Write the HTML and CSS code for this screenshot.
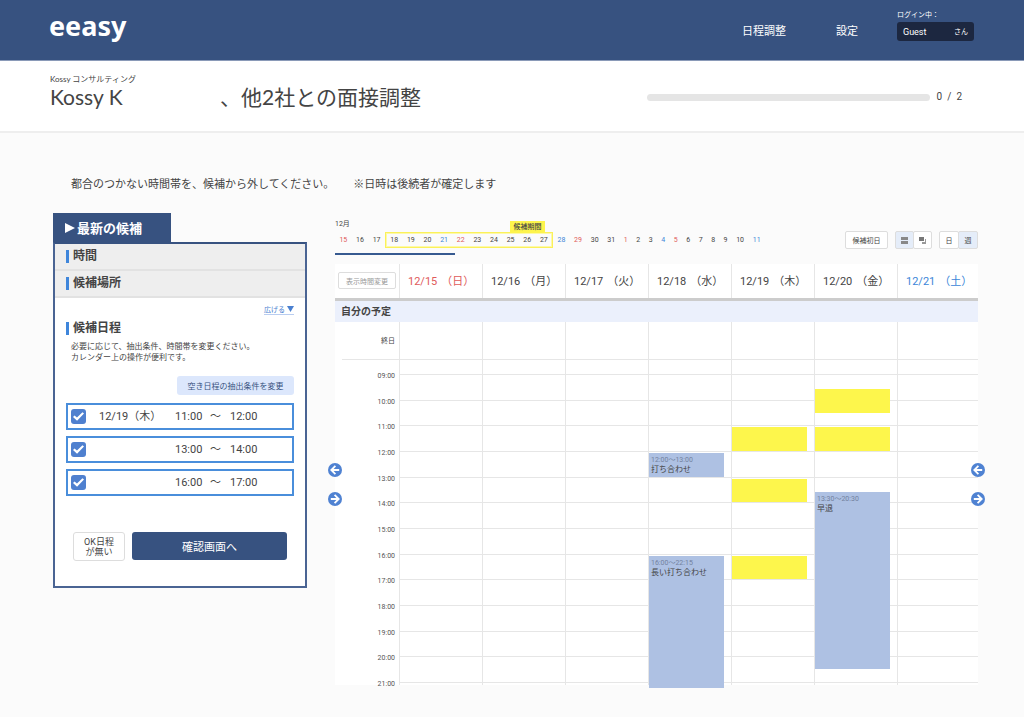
FILE: index.html
```html
<!DOCTYPE html>
<html lang="ja">
<head>
<meta charset="utf-8">
<meta name="viewport" content="width=device-width, initial-scale=1">
<title>eeasy</title>
<link rel="stylesheet" href="styles.css">
</head>
<body>
<svg class="defs" aria-hidden="true">
  <symbol id="arrow-left" viewBox="0 0 14 14"><circle cx="7" cy="7" r="7" fill="#4f82d2"/><path d="M11.2 7H4M7.4 2.9L3.3 7L7.4 11.1" fill="none" stroke="#fff" stroke-width="1.8"/></symbol>
  <symbol id="arrow-right" viewBox="0 0 14 14"><circle cx="7" cy="7" r="7" fill="#4f82d2"/><path d="M2.8 7H10M6.6 2.9L10.7 7L6.6 11.1" fill="none" stroke="#fff" stroke-width="1.8"/></symbol>
</svg>

<header class="topbar">
  <a class="logo" href="#">eeasy</a>
  <nav class="nav">
    <a href="#">日程調整</a>
    <a href="#">設定</a>
  </nav>
  <div class="login">
    <span class="login-label">ログイン中：</span>
    <div class="login-user"><span class="login-name">Guest</span><span>さん</span></div>
  </div>
</header>

<section class="subject">
  <div class="subject-text">
    <p class="company">Kossy コンサルティング</p>
    <h1 class="title"><span class="title-name">Kossy K</span><span>、他2社との面接調整</span></h1>
  </div>
  <div class="progress">
    <progress class="bar" value="0" max="2" aria-label="進捗"></progress>
    <div class="count"><span>0</span><span>/</span><span>2</span></div>
  </div>
</section>

<main>
  <p class="intro"><span>都合のつかない時間帯を、候補から外してください。</span><span>※日時は後続者が確定します</span></p>

  <div class="columns">
    <aside class="side">
      <div class="tab"><svg width="10" height="10" viewBox="0 0 10 10"><path d="M0 0L10 5L0 10z" fill="#fff"/></svg>最新の候補</div>
      <div class="panel">
        <div class="fold"><h2 class="heading">時間</h2></div>
        <div class="fold"><h2 class="heading">候補場所</h2></div>
        <div class="panel-body">
          <a class="expand" href="#">広げる <svg width="7" height="6" viewBox="0 0 7 6"><path d="M0 0H7L3.5 6z" fill="#4a80d0"/></svg></a>
          <h2 class="heading">候補日程</h2>
          <p class="desc">必要に応じて、抽出条件、時間帯を変更ください。<br>カレンダー上の操作が便利です。</p>
          <button class="condition" type="button">空き日程の抽出条件を変更</button>
          <div class="slots">
            <label class="slot"><input type="checkbox" checked><span>12/19（木）</span><span>11:00</span><span>〜</span><span>12:00</span></label>
            <label class="slot"><input type="checkbox" checked><span></span><span>13:00</span><span>〜</span><span>14:00</span></label>
            <label class="slot"><input type="checkbox" checked><span></span><span>16:00</span><span>〜</span><span>17:00</span></label>
          </div>
          <div class="actions">
            <button class="none" type="button">OK日程<br>が無い</button>
            <button class="confirm" type="button">確認画面へ</button>
          </div>
        </div>
      </div>
    </aside>

    <section class="schedule">
      <div class="month">12月</div>
      <div class="tools">
        <div class="strip">
          <span class="sun">15</span><span>16</span><span>17</span>
          <div class="period"><b class="period-tag">候補期間</b><span>18</span><span>19</span><span>20</span><span class="sat">21</span><span class="sun">22</span><span>23</span><span>24</span><span>25</span><span>26</span><span>27</span></div>
          <span class="sat">28</span><span class="sun">29</span><span>30</span><span>31</span>
          <span class="one sun">1</span><span class="one">2</span><span class="one">3</span><span class="one sat">4</span><span class="one sun">5</span><span class="one">6</span><span class="one">7</span><span class="one">8</span><span class="one">9</span>
          <span>10</span><span class="sat">11</span>
        </div>
        <div class="buttons">
          <button class="tool wide" type="button">候補初日</button>
          <div class="group icons">
            <button class="tool on" type="button" aria-label="一覧表示"><svg width="7" height="7" viewBox="0 0 7 7"><path d="M0 0H7V3H0zM0 4H7V7H0z" fill="#888"/></svg></button>
            <button class="tool" type="button" aria-label="重ねて表示"><svg width="7" height="7" viewBox="0 0 7 7"><path d="M0 0H5V4H0z" fill="#777"/><path d="M3 5H6V2H7V7H3z" fill="#999"/></svg></button>
          </div>
          <div class="group">
            <button class="tool" type="button">日</button>
            <button class="tool on" type="button">週</button>
          </div>
        </div>
      </div>
      <div class="marker"></div>

      <div class="calendar">
        <div class="week head">
          <div class="head-tool"><button class="range" type="button">表示時間変更</button></div>
          <div class="day sun"><span>12/15</span><span>（日）</span></div>
          <div class="day"><span>12/16</span><span>（月）</span></div>
          <div class="day"><span>12/17</span><span>（火）</span></div>
          <div class="day"><span>12/18</span><span>（水）</span></div>
          <div class="day"><span>12/19</span><span>（木）</span></div>
          <div class="day"><span>12/20</span><span>（金）</span></div>
          <div class="day sat"><span>12/21</span><span>（土）</span></div>
        </div>
        <h2 class="owner">自分の予定</h2>
        <div class="week allday">
          <div class="allday-label">終日</div>
          <div class="cell"></div><div class="cell"></div><div class="cell"></div><div class="cell"></div><div class="cell"></div><div class="cell"></div><div class="cell"></div>
        </div>
        <div class="week hours">
          <div class="times">
            <span>09:00</span><span>10:00</span><span>11:00</span><span>12:00</span><span>13:00</span><span>14:00</span><span>15:00</span><span>16:00</span><span>17:00</span><span>18:00</span><span>19:00</span><span>20:00</span><span>21:00</span>
          </div>
          <div class="lines"><i></i><i></i><i></i><i></i><i></i><i></i><i></i><i></i><i></i><i></i><i></i><i></i><i></i></div>
          <div class="slots-day d1"></div>
          <div class="slots-day d2"></div>
          <div class="slots-day d3"></div>
          <div class="slots-day d4">
            <div class="event" style="grid-row: 7 / 9"><small>12:00〜13:00</small>打ち合わせ</div>
            <div class="event past" style="grid-row: 15 / 25"><small>16:00〜22:15</small>長い打ち合わせ</div>
          </div>
          <div class="slots-day d5">
            <div class="free" style="grid-row: 5 / 7"></div>
            <div class="free" style="grid-row: 9 / 11"></div>
            <div class="free" style="grid-row: 15 / 17"></div>
          </div>
          <div class="slots-day d6">
            <div class="free" style="grid-row: 2 / 4"></div>
            <div class="free" style="grid-row: 5 / 7"></div>
            <div class="event" style="grid-row: 10 / 24"><small>13:30〜20:30</small>早退</div>
          </div>
          <div class="slots-day d7"></div>
        </div>
        <div class="pager start">
          <button type="button" aria-label="前へ"><svg width="14" height="14"><use href="#arrow-left"/></svg></button>
          <button type="button" aria-label="次へ"><svg width="14" height="14"><use href="#arrow-right"/></svg></button>
        </div>
        <div class="pager end">
          <button type="button" aria-label="前へ"><svg width="14" height="14"><use href="#arrow-left"/></svg></button>
          <button type="button" aria-label="次へ"><svg width="14" height="14"><use href="#arrow-right"/></svg></button>
        </div>
      </div>
    </section>
  </div>
</main>
</body>
</html>
```
FILE: styles.css
```css
* { box-sizing: border-box; }
body {
  margin: 0;
  background: #fbfbfb;
  color: #444;
  font-family: Roboto, "Noto Sans CJK JP", sans-serif;
  font-size: 11px;
}
h1, h2, p { margin: 0; }
a { text-decoration: none; }
svg { display: block; }
button { font: inherit; color: inherit; padding: 0; cursor: pointer; }
.defs { position: absolute; width: 0; height: 0; }
.sun { color: #e05a5a; }
.sat { color: #3b86d8; }

/* top bar */
.topbar {
  display: flex;
  align-items: flex-start;
  height: 61px;
  padding: 0 50px 0 49px;
  background: #375280;
  border-bottom: 1px solid #8a9ab8;
  color: #fff;
}
.logo {
  flex: 1;
  padding-top: 8px;
  color: #fff;
  font: bold 27px/36px "Noto Sans", sans-serif;
}
.nav { display: flex; gap: 50px; padding: 24px 39px 0 0; line-height: 16px; }
.nav a { color: #fff; }
.login { width: 77px; padding-top: 10px; font-size: 7px; line-height: 10px; }
.login-label { display: block; }
.login-user {
  display: flex;
  justify-content: space-between;
  align-items: center;
  height: 19px;
  margin-top: 2px;
  padding: 0 6px;
  border-radius: 3px;
  background: #1c2740;
}
.login-name { font-size: 9px; }

/* subject */
.subject {
  display: flex;
  align-items: flex-start;
  justify-content: space-between;
  height: 72px;
  padding: 12px 62px 0 50px;
  background: #fff;
  border-bottom: 2px solid #eee;
}
.company { font: 8px/12px Lato, "Noto Sans CJK JP", sans-serif; }
.title {
  display: flex;
  font: 21px/24px Lato, "Noto Sans CJK JP", sans-serif;
}
.title-name { width: 170px; }
.progress { display: flex; align-items: center; gap: 7px; padding-top: 17px; }
.bar {
  appearance: none;
  width: 283px;
  height: 7px;
  border: 0;
  border-radius: 4px;
  background: #e5e5e5;
  overflow: hidden;
}
.bar::-webkit-progress-bar { background: #e5e5e5; }
.bar::-webkit-progress-value { background: #4a80d0; }
.count { display: flex; gap: 5px; font-size: 10px; line-height: 14px; }

/* main */
main { padding: 44px 46px 30px 53px; }
.intro { display: flex; gap: 19px; padding-left: 18px; line-height: 16px; }
.columns { display: flex; align-items: flex-start; gap: 28px; padding-top: 20px; }

/* side panel */
.side { flex: none; width: 254px; }
.tab {
  display: flex;
  align-items: center;
  gap: 2px;
  width: 118px;
  height: 29px;
  padding-left: 12px;
  background: #375280;
  color: #fff;
  font-size: 13px;
  font-weight: bold;
}
.panel { border: 2px solid #4a6493; border-top-color: #375280; background: #fff; }
.fold {
  display: flex;
  align-items: center;
  height: 27px;
  padding-left: 11px;
  background: #eee;
  border-bottom: 2px solid #e2e2e2;
}
.heading {
  padding-left: 4px;
  border-left: 3px solid #3f86db;
  font-size: 12px;
  line-height: 13px;
}
.panel-body { display: flex; flex-direction: column; padding: 5px 11px 25px; }
.expand {
  display: flex;
  align-items: center;
  gap: 2px;
  align-self: flex-end;
  height: 12px;
  border-bottom: 1px solid #b9cdf0;
  color: #4a80d0;
  font-size: 7px;
}
.panel-body .heading { margin-top: 7px; }
.desc { padding: 6px 0 0 5px; font-size: 8px; line-height: 11px; }
.condition {
  align-self: flex-end;
  width: 117px;
  height: 19px;
  margin-top: 13px;
  border: 0;
  border-radius: 3px;
  background: #dce7fc;
  color: #375280;
  font-size: 8px;
}
.slots { display: grid; gap: 6px; padding-top: 8px; }
.slot {
  display: grid;
  grid-template-columns: 28px 76px 35px 20px 1fr;
  align-items: center;
  height: 27px;
  padding-left: 3px;
  border: 2px solid #4a8edb;
  background: #fff;
  line-height: 16px;
}
.slot input {
  appearance: none;
  display: grid;
  place-items: center;
  width: 15px;
  height: 15px;
  margin: 0;
  border-radius: 3px;
  background: #4f80cf;
}
.slot input:checked::before {
  content: "";
  width: 11px;
  height: 9px;
  background: #fff;
  clip-path: polygon(0 55%, 14% 38%, 36% 62%, 86% 2%, 100% 18%, 37% 96%);
}
.actions { display: grid; grid-template-columns: 52px 1fr; gap: 7px; padding: 36px 7px 0; }
.none {
  height: 29px;
  border: 1px solid #ddd;
  border-radius: 3px;
  background: #fff;
  font-size: 9px;
  line-height: 10px;
}
.confirm { height: 28px; border: 0; border-radius: 3px; background: #375280; color: #fff; font-size: 11px; }

/* date strip and view controls */
.schedule { flex: 1; min-width: 0; padding-top: 6px; }
.month { font-size: 7px; line-height: 10px; }
.tools { display: flex; justify-content: space-between; align-items: center; height: 16px; margin-top: 3px; }
.strip { display: flex; align-items: center; flex: 0 1 430px; font-size: 7px; text-align: center; }
.strip span { flex: 4 1 0; }
.strip .one { flex-grow: 3; }
.period {
  position: relative;
  display: flex;
  align-items: center;
  flex: 40 1 0;
  height: 16px;
  border: 1px solid #fbf15a;
  outline: 1px solid #fdf9a8;
  outline-offset: -2px;
}
.period-tag {
  position: absolute;
  right: 7px;
  bottom: 100%;
  width: 35px;
  background: #fdf44c;
  font-weight: 500;
  line-height: 12px;
}
.buttons { display: flex; gap: 7px; font-size: 7px; }
.group { display: flex; }
.tool {
  display: grid;
  place-items: center;
  width: 20px;
  height: 18px;
  border: 1px solid #ddd;
  border-radius: 2px;
  background: #fff;
}
.tool + .tool { margin-left: -1px; }
.icons .tool { width: 19px; }
.wide { width: 43px; }
.on { background: #e5edf9; }
.marker { width: 120px; height: 2px; margin-top: 5px; background: #375a90; }

/* calendar */
.calendar { position: relative; margin-top: 9px; background: #fff; }
.week { display: grid; grid-template-columns: 64px repeat(6, 83fr) 81fr; }
.head { height: 37px; border-bottom: 3px solid #ccc; }
.head-tool { padding: 8px 0 0 3px; }
.range {
  width: 58px;
  height: 17px;
  border: 1px solid #ddd;
  border-radius: 2px;
  background: #fff;
  color: #999;
  font-size: 7px;
}
.day {
  display: flex;
  align-items: baseline;
  gap: 4px;
  padding: 10px 0 0 8px;
  border-left: 1px solid #e6e6e6;
  line-height: 16px;
  white-space: nowrap;
}
.owner { padding-left: 6px; background: #ebf0fc; font-size: 10px; line-height: 21px; }
.allday { height: 38px; }
.allday-label {
  margin-left: 7px;
  padding: 14px 4px 0 0;
  border-bottom: 1px solid #e6e6e6;
  font-size: 7px;
  line-height: 10px;
  text-align: right;
}
.cell { border-left: 1px solid #e6e6e6; border-bottom: 1px solid #e6e6e6; }
.hours { grid-template-rows: 14px 308px 3px; }
.times, .lines { display: grid; grid-template-rows: repeat(12, 1fr) 3px; }
.times {
  grid-area: 2 / 1 / 4 / 2;
  padding-right: 4px;
  color: #555;
  font-size: 7px;
  line-height: 5px;
  text-align: right;
}
.lines { grid-area: 2 / 2 / 4 / 9; }
.lines i { border-top: 1px solid #e6e6e6; }
.slots-day {
  grid-row: 1 / 4;
  display: grid;
  grid-template-rows: repeat(24, 1fr);
  padding: 14px 7px 3px 0;
  border-left: 1px solid #e6e6e6;
}
.d1 { grid-column: 2; }
.d2 { grid-column: 3; }
.d3 { grid-column: 4; }
.d4 { grid-column: 5; }
.d5 { grid-column: 6; }
.d6 { grid-column: 7; }
.d7 { grid-column: 8; }
.free { margin-top: 2px; background: #fdf64c; }
.event {
  margin-top: 2px;
  padding: 3px 0 0 2px;
  background: #aec1e3;
  font-size: 8px;
  line-height: 9px;
  min-height: 0;
}
.event small { display: block; color: #73829e; font-size: 7px; line-height: 9px; }
.past { margin-bottom: -6px; }
.pager { position: absolute; top: 199px; display: grid; gap: 15px; }
.pager.start { left: -7px; }
.pager.end { right: -7px; }
.pager button { border: 0; background: none; }
```
